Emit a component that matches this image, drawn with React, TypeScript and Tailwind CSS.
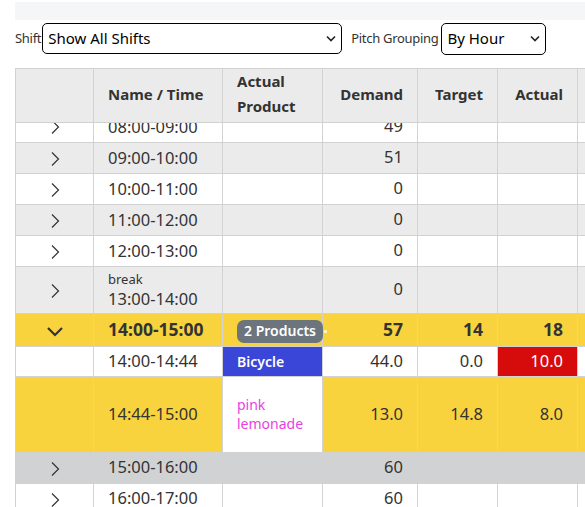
import React from "react";

const F = { fontFamily: '"Noto Sans", "Open Sans", sans-serif' };

function Right() {
  return (
    <svg width="10" height="16" viewBox="0 0 10 16" className="inline-block">
      <path d="M2 1.5 L8.5 8 L2 14.5" fill="none" stroke="#333" strokeWidth="1.2" />
    </svg>
  );
}
function Down() {
  return (
    <svg width="18" height="11" viewBox="0 0 18 11" className="inline-block">
      <path d="M2 2 L9 9 L16 2" fill="none" stroke="#333" strokeWidth="2.2" />
    </svg>
  );
}
function SelChev() {
  return (
    <svg width="10" height="7" viewBox="0 0 10 7">
      <path d="M1 1.5 L5 5.5 L9 1.5" fill="none" stroke="#222" strokeWidth="1.6" />
    </svg>
  );
}

const td = "border-r border-b border-[#d2d2d2] px-[14px] align-middle whitespace-nowrap";

type Row = { t: string; d: string; bg: string; sub?: string; h: number };
const rowsA: Row[] = [
  { t: "08:00-09:00", d: "49", bg: "bg-white", h: 31 },
  { t: "09:00-10:00", d: "51", bg: "bg-[#ebebeb]", h: 31 },
  { t: "10:00-11:00", d: "0", bg: "bg-white", h: 31 },
  { t: "11:00-12:00", d: "0", bg: "bg-[#ebebeb]", h: 31 },
  { t: "12:00-13:00", d: "0", bg: "bg-white", h: 31 },
  { t: "13:00-14:00", d: "0", bg: "bg-[#ebebeb]", sub: "break", h: 47 },
];

function Cols() {
  return (
    <colgroup>
      <col className="w-[78px]" />
      <col className="w-[129px]" />
      <col className="w-[100px]" />
      <col className="w-[95px]" />
      <col className="w-[80px]" />
      <col className="w-[80px]" />
      <col className="w-[80px]" />
    </colgroup>
  );
}

export default function App() {
  return (
    <div className="w-[585px] h-[507px] overflow-hidden bg-white text-[#333]" style={F}>
      <div className="pl-[15px] pt-[2px]">
        <div className="h-[18px] bg-[#f5f6f8]" />
        <div className="flex items-center h-[33px] mt-[2px]">
          <span className="text-[13px] text-[#333] tracking-[-0.3px]">Shift</span>
          <div className="relative ml-[1px]">
            <div className="w-[300px] h-[31px] border border-black rounded-[5px] bg-white flex items-center pl-[5px] text-[15px] text-black">
              Show All Shifts
            </div>
            <div className="absolute right-[6px] top-[12px]"><SelChev /></div>
          </div>
          <span className="ml-[9px] text-[13px] text-[#333] tracking-[-0.3px]">Pitch Grouping</span>
          <div className="relative ml-[3px]">
            <div className="w-[105px] h-[32px] border border-black rounded-[5px] bg-white flex items-center pl-[5px] text-[15px] text-black">
              By Hour
            </div>
            <div className="absolute right-[6px] top-[12px]"><SelChev /></div>
          </div>
        </div>
        <div className="mt-[13px] overflow-hidden w-[570px]">
          <table className="table-fixed border-collapse w-[642px] border-t border-l border-[#d2d2d2]">
            <Cols />
            <thead>
              <tr className="bg-[#ebebeb] h-[54px] text-[15px] font-bold leading-[25px]">
                <th className={td + " pb-[3px]"}></th>
                <th className={td + " text-left pb-[3px]"}>Name / Time</th>
                <th className={td + " text-left pb-[3px]"}>Actual<br />Product</th>
                <th className={td + " text-right pb-[3px]"}>Demand</th>
                <th className={td + " text-right pb-[3px]"}>Target</th>
                <th className={td + " text-right pb-[3px]"}>Actual</th>
                <th className={td + " pb-[3px]"}></th>
              </tr>
            </thead>
          </table>
          <div className="h-[400px] overflow-hidden">
            <table className="table-fixed border-collapse w-[642px] border-l border-[#d2d2d2] -mt-[12px] text-[16.5px]">
              <Cols />
              <tbody>
                {rowsA.map((r) => (
                  <tr key={r.t} className={r.bg} style={{ height: r.h }}>
                    <td className={td + " text-center"}><Right /></td>
                    <td className={td + " leading-[21px]"}>
                      {r.sub && <div className="text-[13px] leading-[17px]">{r.sub}</div>}
                      {r.t}
                    </td>
                    <td className={td}></td>
                    <td className={td + " text-right"}>{r.d}</td>
                    <td className={td}></td>
                    <td className={td}></td>
                    <td className={td}></td>
                  </tr>
                ))}
                <tr className="bg-[#f9d33d] h-[33px] border-t border-t-black font-bold text-[17.5px]">
                  <td className={td + " text-center"}><Down /></td>
                  <td className={td}>14:00-15:00</td>
                  <td className={td}>
                    <div className="relative inline-flex align-middle">
                      <span className="inline-flex items-center h-[23px] px-[7px] rounded-[7px] bg-[#6c757d] text-white text-[14px] font-semibold leading-none">2 Products</span>
                      <span className="absolute -right-[4px] top-[10px] w-[3px] h-[3px] bg-white rounded-full" />
                    </div>
                  </td>
                  <td className={td + " text-right"}>57</td>
                  <td className={td + " text-right"}>14</td>
                  <td className={td + " text-right"}>18</td>
                  <td className={td}></td>
                </tr>
                <tr className="h-[30px]">
                  <td className={td + " bg-white"}></td>
                  <td className={td + " bg-white"}>14:00-14:44</td>
                  <td className={td + " bg-[#3a46d8] text-white text-[14px] font-semibold"}>Bicycle</td>
                  <td className={td + " bg-white text-right"}>44.0</td>
                  <td className={td + " bg-white text-right"}>0.0</td>
                  <td className={td + " bg-[#d60b0b] text-white text-right"}>10.0</td>
                  <td className={td + " bg-white"}></td>
                </tr>
                <tr className="h-[76px] bg-[#f9d33d] border-b border-b-black">
                  <td className={td}></td>
                  <td className={td}>14:44-15:00</td>
                  <td className={td + " bg-white text-[#e83fe2] text-[14px] leading-[19px]"}>pink<br />lemonade</td>
                  <td className={td + " text-right"}>13.0</td>
                  <td className={td + " text-right"}>14.8</td>
                  <td className={td + " text-right"}>8.0</td>
                  <td className={td}></td>
                </tr>
                <tr className="h-[31px] bg-[#d1d2d4]">
                  <td className={td + " text-center"}><Right /></td>
                  <td className={td}>15:00-16:00</td>
                  <td className={td}></td>
                  <td className={td + " text-right"}>60</td>
                  <td className={td}></td>
                  <td className={td}></td>
                  <td className={td}></td>
                </tr>
                <tr className="h-[31px] bg-white">
                  <td className={td + " text-center"}><Right /></td>
                  <td className={td}>16:00-17:00</td>
                  <td className={td}></td>
                  <td className={td + " text-right"}>60</td>
                  <td className={td}></td>
                  <td className={td}></td>
                  <td className={td}></td>
                </tr>
              </tbody>
            </table>
          </div>
        </div>
      </div>
    </div>
  );
}
